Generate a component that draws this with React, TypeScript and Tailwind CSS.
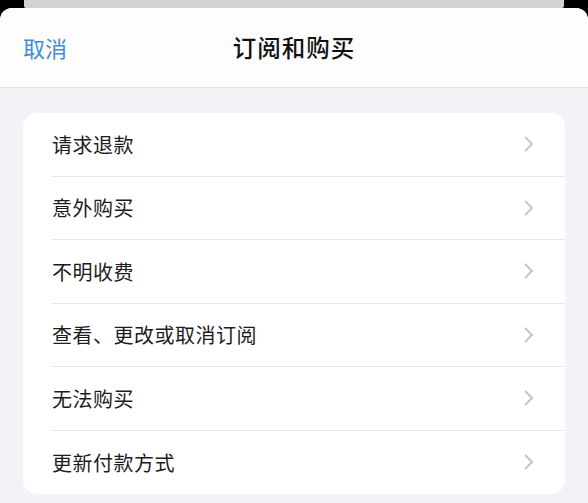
const items = ["请求退款", "意外购买", "不明收费", "查看、更改或取消订阅", "无法购买", "更新付款方式"];

function Chevron() {
  return (
    <svg width="10" height="16" viewBox="0 0 10 16" fill="none" className="shrink-0">
      <path d="M1.5 1.5 L8 8 L1.5 14.5" stroke="#c4c4c8" strokeWidth="1.9" strokeLinecap="round" strokeLinejoin="round" />
    </svg>
  );
}

export default function App() {
  return (
    <div
      className="w-[588px] h-[503px] bg-black overflow-hidden flex flex-col"
      style={{ fontFamily: '"Noto Sans CJK SC", "Noto Sans", sans-serif' }}
    >
      <div className="mx-[24px] h-[8px] shrink-0 bg-[#d2d2d6] rounded-b-[2px]" />
      <div className="flex-1 bg-[#f2f2f7] rounded-t-[12px] overflow-hidden flex flex-col">
        <div className="h-[80px] shrink-0 bg-[#fdfdfe] border-b border-[#e4e4e8] relative flex items-center justify-center">
          <span className="absolute left-[23px] top-[24px] text-[22px] leading-[30px] text-[#3b8fd2]">取消</span>
          <span className="text-[23.5px] leading-[30px] font-medium text-[#111] tracking-[1px] -mt-[2px]">订阅和购买</span>
        </div>
        <div className="mt-[25px] mx-[23px] bg-white rounded-[14px] overflow-hidden">
          {items.map((t, i) => (
            <div key={t} className="pl-[29px] h-[63.5px] flex">
              <div
                className={`flex-1 flex items-center justify-between pr-[31px] ${
                  i < items.length - 1 ? "border-b border-[#e6e6ea]" : ""
                }`}
              >
                <span className="text-[20px] text-[#1c1c1e] tracking-[0.5px] mt-[1px]">{t}</span>
                <Chevron />
              </div>
            </div>
          ))}
        </div>
      </div>
    </div>
  );
}
